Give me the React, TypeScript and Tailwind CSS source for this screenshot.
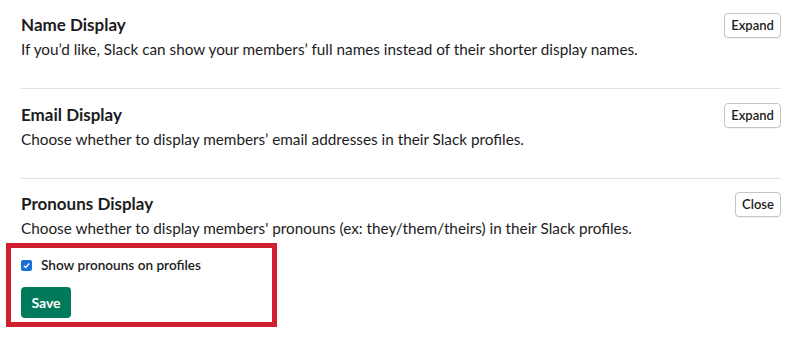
import React from "react";

function Section({
  title,
  desc,
  btn,
  btnW,
}: {
  title: string;
  desc: string;
  btn: string;
  btnW: string;
}) {
  return (
    <div className="flex justify-between items-start">
      <div>
        <div className="text-[17px] leading-[24px] font-bold text-[#1d1c1d]">{title}</div>
        <div className="text-[15.3px] leading-[24px] text-[#1d1c1d]">{desc}</div>
      </div>
      <button
        className={`${btnW} h-[25px] rounded-[4px] border border-[#c4c4c4] bg-white text-[13px] font-semibold text-[#1d1c1d] leading-none shadow-[0_1px_1px_rgba(0,0,0,0.05)]`}
      >
        {btn}
      </button>
    </div>
  );
}

export default function App() {
  return (
    <div
      className="w-[800px] h-[340px] bg-white overflow-hidden pl-[21px] pr-[19px]"
      style={{ fontFamily: "Lato, 'Noto Sans', sans-serif" }}
    >
      <div className="h-[89px] pt-[13px] border-b border-[#e2e2e2]">
        <Section
          title="Name Display"
          desc="If you’d like, Slack can show your members’ full names instead of their shorter display names."
          btn="Expand"
          btnW="w-[57px]"
        />
      </div>
      <div className="h-[90px] pt-[14px] border-b border-[#e2e2e2]">
        <Section
          title="Email Display"
          desc="Choose whether to display members’ email addresses in their Slack profiles."
          btn="Expand"
          btnW="w-[57px]"
        />
      </div>
      <div className="pt-[13px]">
        <Section
          title="Pronouns Display"
          desc="Choose whether to display members' pronouns (ex: they/them/theirs) in their Slack profiles."
          btn="Close"
          btnW="w-[46px]"
        />
        <div className="mt-[3px] -ml-[15px] w-[271px] h-[84px] border-[5px] border-[#d01f2e] pl-[10px] pt-[7px]">
          <label className="flex items-center h-[20px] gap-[9px]">
            <span className="w-[11px] h-[11px] rounded-[2px] bg-[#1a6fd6] flex items-center justify-center">
              <svg viewBox="0 0 12 12" className="w-[9px] h-[9px]">
                <path d="M2.5 6.2 L5 8.6 L9.6 3.4" fill="none" stroke="white" strokeWidth="1.8" />
              </svg>
            </span>
            <span className="text-[13.6px] font-semibold text-[#1d1c1d]">Show pronouns on profiles</span>
          </label>
          <button className="mt-[12px] w-[50px] h-[31px] rounded-[4px] bg-[#007a5a] text-white text-[14px] font-bold leading-none">
            Save
          </button>
        </div>
      </div>
    </div>
  );
}
